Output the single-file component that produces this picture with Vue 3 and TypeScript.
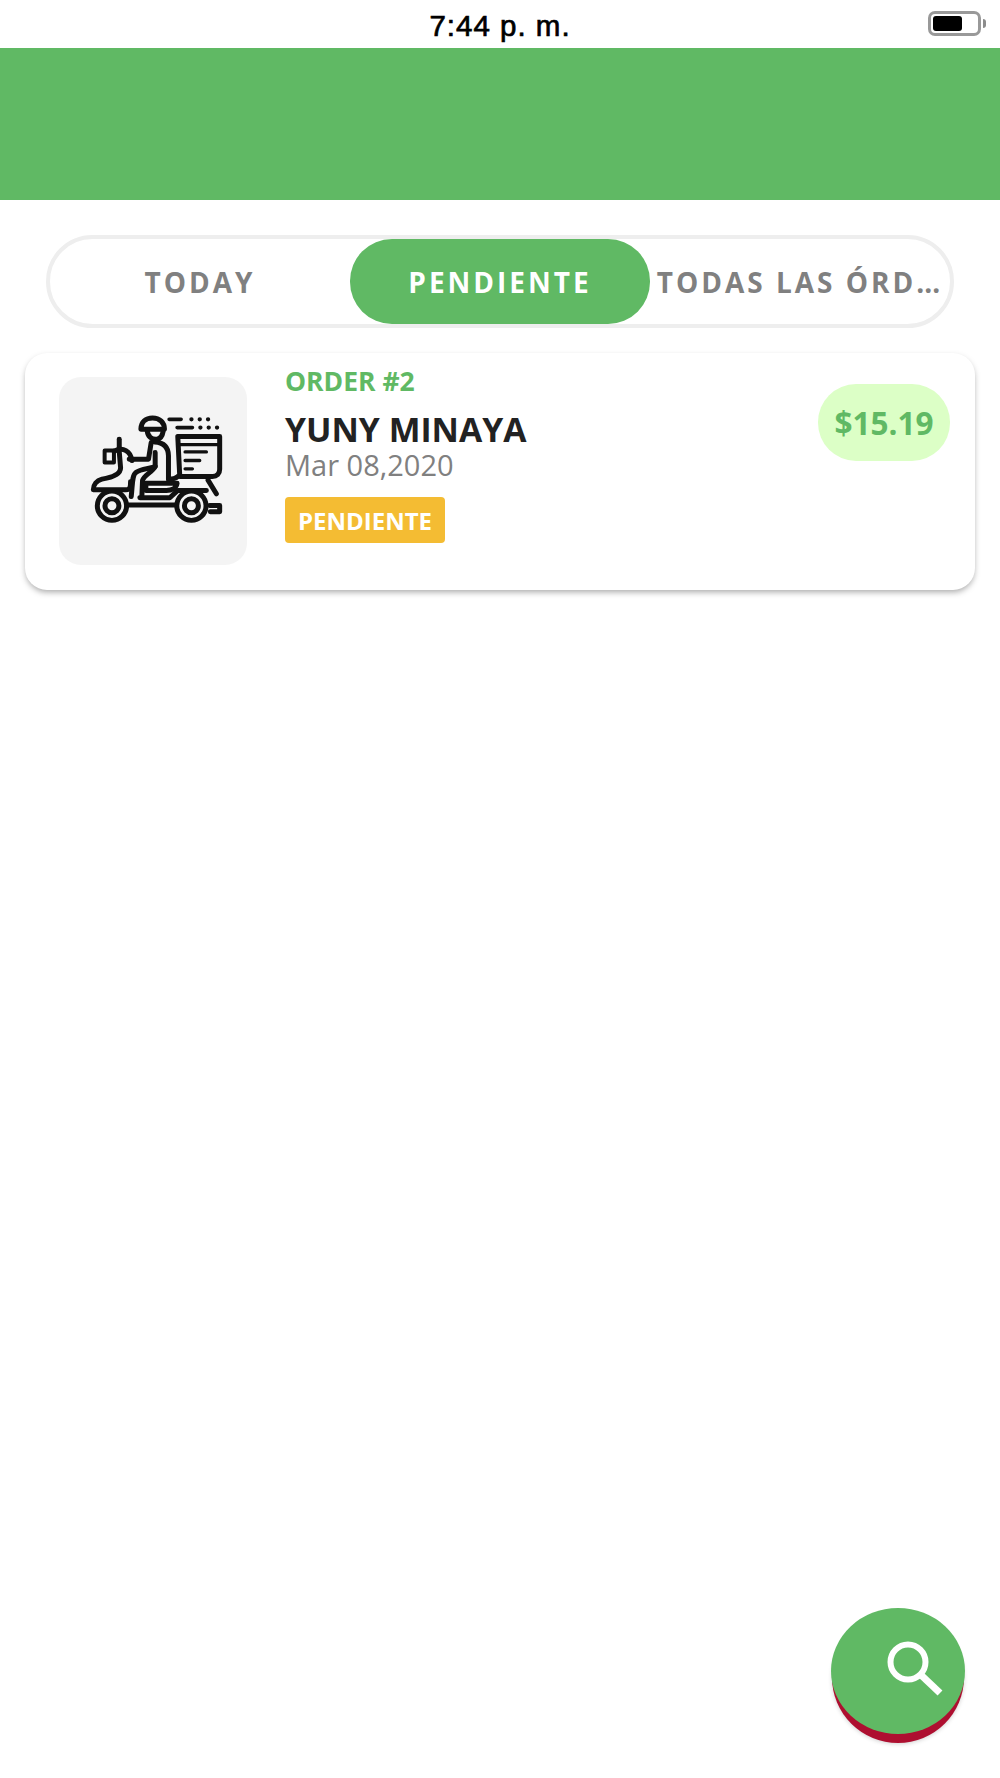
<script setup lang="ts">
const tabs = [
  { label: 'TODAY', active: false },
  { label: 'PENDIENTE', active: true },
  { label: 'TODAS LAS ÓRD…', active: false },
]

const order = {
  number: 'ORDER #2',
  name: 'YUNY MINAYA',
  date: 'Mar 08,2020',
  status: 'PENDIENTE',
  total: '$15.19',
}
</script>

<template>
  <div class="screen">
    <div class="status-bar">
      <span class="time">7:44 p. m.</span>
      <div class="battery">
        <div class="battery-body"><div class="battery-fill"></div></div>
        <div class="battery-nub"></div>
      </div>
    </div>
    <div class="header"></div>

    <div class="tabs">
      <div v-for="tab in tabs" :key="tab.label" class="tab" :class="{ active: tab.active }">
        {{ tab.label }}
      </div>
    </div>

    <div class="card">
      <div class="thumb">
        <svg class="rider" viewBox="150 160 400 335" fill="none" stroke="#111" stroke-width="15" stroke-linecap="round" stroke-linejoin="round">
          <!-- speed lines -->
          <path d="M388 172H424M412 197H458" stroke-width="11" />
          <path d="M455 172h.1M480 172h.1M505 172h.1M482 197h.1M507 197h.1M532 197h.1" stroke-width="13" />
          <!-- helmet -->
          <path d="M303 202C303 180 318 168 338 168C360 168 374 182 374 202Z" />
          <path d="M322 206C324 224 335 234 352 232C362 230 368 220 370 208" />
          <!-- box -->
          <path d="M414 224H540V322C540 336 532 344 518 344H420Z" />
          <path d="M414 248H540" stroke-width="10" />
          <path d="M436 270H500M436 296H480M436 321H458" stroke-width="10" />
          <!-- body and arm -->
          <path d="M345 240C372 242 386 256 386 282V352" />
          <path d="M334 242L326 292H268" />
          <path d="M346 272V314C330 320 300 322 288 332C276 340 278 370 274 404" />
          <path d="M346 314C336 332 312 340 308 356L306 404" />
          <!-- seat -->
          <path d="M318 364H412C410 378 396 386 380 386H318Z" />
          <path d="M386 352C398 352 408 350 414 344" />
          <!-- handlebar and front shield -->
          <path d="M238 232V258" />
          <rect x="194" y="266" width="28" height="36" stroke-width="12" />
          <path d="M222 268C250 254 272 268 276 296" />
          <path d="M238 270L242 318C242 340 212 348 186 352C170 356 160 368 160 384H258C272 384 272 372 272 360" />
          <!-- floor -->
          <path d="M262 430H410M300 408H390L414 386H500" />
          <path d="M505 355L530 396M510 431H540V450H512" />
          <!-- wheels -->
          <circle cx="216" cy="432" r="44" />
          <circle cx="216" cy="432" r="21" />
          <circle cx="455" cy="432" r="44" />
          <circle cx="455" cy="432" r="21" />
        </svg>
      </div>
      <div class="info">
        <div class="order-no">{{ order.number }}</div>
        <div class="name">{{ order.name }}</div>
        <div class="date">{{ order.date }}</div>
        <span class="badge">{{ order.status }}</span>
      </div>
      <div class="price">{{ order.total }}</div>
    </div>

    <div class="fab">
      <div class="fab-top">
        <svg class="search" viewBox="0 0 60 60" fill="none" stroke="#fff">
          <circle cx="23" cy="22" r="17.5" stroke-width="6" />
          <path d="M36 35L55 53" stroke-width="7" />
        </svg>
      </div>
    </div>
  </div>
</template>

<style>
html,
body {
  margin: 0;
  background: #fff;
}
</style>

<style scoped>
.screen {
  position: relative;
  width: 1000px;
  height: 1778px;
  overflow: hidden;
  background: #fff;
  font-family: "Open Sans", sans-serif;
}

.status-bar {
  height: 48px;
  display: flex;
  align-items: center;
  justify-content: center;
  position: relative;
}

.time {
  margin-top: 3px;
  font-family: "Liberation Sans", sans-serif;
  font-size: 29.5px;
  letter-spacing: 1px;
  color: #000;
  -webkit-text-stroke: 0.7px #000;
}

.battery {
  position: absolute;
  top: 11px;
  left: 928px;
  display: flex;
  align-items: center;
  gap: 2px;
}

.battery-body {
  width: 53px;
  height: 25px;
  box-sizing: border-box;
  padding: 2px;
  border: 3px solid #999;
  border-radius: 7px;
}

.battery-fill {
  width: 29px;
  height: 100%;
  background: #000;
  border-radius: 3px;
}

.battery-nub {
  width: 3px;
  height: 9px;
  background: #8c8c8c;
  border-radius: 0 4px 4px 0;
}

.header {
  height: 152px;
  background: #60b964;
}

.tabs {
  margin: 35px 46px 0;
  height: 93px;
  box-sizing: border-box;
  border: 4px solid #eeeeee;
  border-radius: 47px;
  display: grid;
  grid-template-columns: 300px 300px 300px;
  align-items: stretch;
}

.tab {
  display: flex;
  align-items: center;
  justify-content: center;
  font-size: 28px;
  font-weight: 700;
  letter-spacing: 3px;
  color: #808080;
  white-space: nowrap;
  border-radius: 42px;
}

.tab.active {
  background: #60b964;
  color: #fff;
}

.card {
  margin: 25px 25px 0;
  height: 237px;
  box-sizing: border-box;
  padding: 24px 25px 24px 34px;
  display: flex;
  align-items: flex-start;
  background: #fff;
  border-radius: 22px;
  box-shadow: 0 3px 6px -1px rgba(0, 0, 0, 0.35);
}

.thumb {
  width: 188px;
  height: 188px;
  flex: none;
  display: flex;
  align-items: center;
  justify-content: center;
  background: #f4f4f4;
  border-radius: 22px;
}

.rider {
  width: 133px;
  height: 112px;
  margin-left: 6px;
}

.info {
  margin: -11px 0 0 38px;
  flex: 1;
  display: flex;
  flex-direction: column;
  align-items: flex-start;
}

.order-no {
  font-size: 26.5px;
  line-height: 30px;
  font-weight: 700;
  color: #60b964;
}

.name {
  margin-top: 13px;
  font-size: 33.7px;
  line-height: 40px;
  font-weight: 700;
  color: #222;
}

.date {
  font-size: 29px;
  line-height: 32px;
  color: #808080;
}

.badge {
  margin-top: 16px;
  height: 46px;
  box-sizing: border-box;
  padding: 0 13px;
  display: flex;
  align-items: center;
  font-size: 24px;
  font-weight: 700;
  color: #fff;
  background: #f4bc33;
  border-radius: 4px;
}

.price {
  flex: none;
  width: 132px;
  height: 77px;
  margin-top: 7px;
  display: flex;
  align-items: center;
  justify-content: center;
  font-size: 31.5px;
  font-weight: 700;
  color: #60b964;
  background: #dcffc6;
  border-radius: 38px;
}

.fab {
  position: absolute;
  left: 832px;
  top: 1612px;
  width: 132px;
  height: 131px;
  background: #ae0f30;
  border-radius: 50%;
  box-shadow: 0 1px 4px rgba(0, 0, 0, 0.18);
}

.fab-top {
  position: absolute;
  left: -1px;
  top: -4px;
  width: 134px;
  height: 126px;
  background: #60b964;
  border-radius: 50%;
}

.search {
  position: absolute;
  left: 54px;
  top: 32px;
  width: 60px;
  height: 60px;
}
</style>
